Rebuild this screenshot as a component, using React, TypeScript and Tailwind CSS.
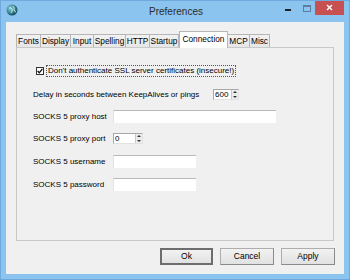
import React from "react";

const font = { fontFamily: '"Liberation Sans", Arial, sans-serif' };

const tabs = [
  { name: "Fonts", w: "w-[25px]" },
  { name: "Display", w: "w-[31px]" },
  { name: "Input", w: "w-[24px]" },
  { name: "Spelling", w: "w-[33px]" },
  { name: "HTTP", w: "w-[25px]" },
  { name: "Startup", w: "w-[30px]" },
  { name: "Connection", w: "w-[49px]", active: true },
  { name: "MCP", w: "w-[23px]" },
  { name: "Misc", w: "w-[21px]" },
];

function Spin({ value, w }: { value: string; w: string }) {
  return (
    <div
      className={`${w} h-[11px] flex bg-white border border-[#a8a8a8] border-r-[#e2e2e2] border-b-[#e2e2e2]`}
    >
      <span className="flex-1 text-[8px] leading-[9px] pl-[1px] text-black">{value}</span>
      <div className="w-[7px] flex flex-col bg-[#ececec] border-l border-[#c8c8c8]">
        <div className="flex-1 flex items-center justify-center">
          <div className="w-0 h-0 border-l-[2px] border-r-[2px] border-b-[2px] border-l-transparent border-r-transparent border-b-[#333]" />
        </div>
        <div className="flex-1 flex items-center justify-center">
          <div className="w-0 h-0 border-l-[2px] border-r-[2px] border-t-[2px] border-l-transparent border-r-transparent border-t-[#333]" />
        </div>
      </div>
    </div>
  );
}

function Field({ w }: { w: string }) {
  return (
    <div className={`${w} h-[13px] bg-white border-t border-[#b9b9b9] border-l border-l-[#e3e3e3]`} />
  );
}

function Btn({ label, main }: { label: string; main?: boolean }) {
  return (
    <button
      className={`h-[17px] flex items-center justify-center text-[8.5px] text-black bg-gradient-to-b from-[#f2f2f2] to-[#e1e1e1] ${
        main
          ? "w-[53px] border-2 border-[#6d6d6d]"
          : "w-[54px] border border-[#adadad] border-r-[#8a8a8a] border-b-[#8a8a8a]"
      }`}
    >
      {label}
    </button>
  );
}

export default function App() {
  return (
    <div
      style={font}
      className="w-[350px] h-[280px] bg-[#8cc4f0] border border-[#6fa9dd] flex flex-col overflow-hidden"
    >
      {/* TITLE BAR */}
      <div className="h-[21px] flex items-start relative">
        <svg className="absolute left-[5px] top-[3px]" width="12" height="12" viewBox="0 0 12 12">
          <defs>
            <radialGradient id="g" cx="0.35" cy="0.35" r="0.7">
              <stop offset="0" stopColor="#7fd0d8" />
              <stop offset="1" stopColor="#0f4b5c" />
            </radialGradient>
          </defs>
          <circle cx="6" cy="6" r="5.5" fill="url(#g)" />
          <path d="M3 4 Q5 3 6 5 T5 9 M7 2 Q9 4 8 6 Q9 8 10 8" stroke="#cfeff2" strokeWidth="0.9" fill="none" />
        </svg>
        <div className="flex-1 text-center text-[10px] leading-[21px] text-[#2b2b2b] pl-[2px]">
          Preferences
        </div>
        <div className="absolute left-[284px] top-[8px] w-[6px] h-[2px] bg-[#222]" />
        <div className="absolute left-[302px] top-[4px] w-[8px] h-[7px] border border-[#5a7da0] border-t-2" />
        <div className="absolute left-[314px] top-[-1px] w-[29px] h-[15px] bg-[#c75050] flex items-center justify-center">
          <svg width="7" height="7" viewBox="0 0 7 7">
            <path d="M1 1 L6 6 M6 1 L1 6" stroke="#fff" strokeWidth="1.4" />
          </svg>
        </div>
      </div>

      {/* CLIENT */}
      <div className="flex-1 mx-[5px] mb-[5px] bg-[#f0f0f0] flex flex-col pl-[10px] pr-[10px] pt-[9px]">
        {/* TABS */}
        <div className="flex items-end h-[16px] relative z-10">
          {tabs.map((t) =>
            t.active ? (
              <div
                key={t.name}
                className={`${t.w} h-[17px] -mb-[1px] bg-white border border-b-0 border-[#b5b5b5] text-[8.3px] leading-[14px] text-center text-black whitespace-nowrap`}
              >
                {t.name}
              </div>
            ) : (
              <div
                key={t.name}
                className={`${t.w} h-[13px] bg-gradient-to-b from-[#f2f2f2] to-[#e6e6e6] border border-b-0 border-[#b5b5b5] -ml-[1px] first:ml-0 text-[8.3px] leading-[12px] text-center text-black whitespace-nowrap`}
              >
                {t.name}
              </div>
            )
          )}
        </div>

        {/* PANEL */}
        <div className="w-[318px] h-[194px] border border-[#c9c9c9] bg-[#f0f0f0] flex flex-col pl-[16px] pt-[17px] text-[8px] text-black">
          <div className="h-[12px] flex items-center">
            <div className="ml-[3px] w-[8px] h-[8px] bg-white border border-[#333] flex items-center justify-center">
              <svg width="6" height="6" viewBox="0 0 6 6">
                <path d="M0.6 3 L2.3 4.8 L5.4 0.8" stroke="#111" strokeWidth="1.3" fill="none" />
              </svg>
            </div>
            <div className="ml-[2px] h-[12px] px-[1px] border border-dotted border-[#555] leading-[10px] whitespace-nowrap">
              Don't authenticate SSL server certificates (insecure!)
            </div>
          </div>

          <div className="mt-[12px] h-[11px] flex items-center">
            <span className="w-[180px] whitespace-nowrap">Delay in seconds between KeepAlives or pings</span>
            <Spin value="600" w="w-[26px]" />
          </div>

          <div className="mt-[10px] h-[13px] flex items-center">
            <span className="w-[80px] whitespace-nowrap">SOCKS 5 proxy host</span>
            <Field w="w-[163px]" />
          </div>

          <div className="mt-[10px] h-[11px] flex items-center">
            <span className="w-[80px] whitespace-nowrap">SOCKS 5 proxy port</span>
            <Spin value="0" w="w-[30px]" />
          </div>

          <div className="mt-[11px] h-[13px] flex items-center">
            <span className="w-[80px] whitespace-nowrap">SOCKS 5 username</span>
            <Field w="w-[83px]" />
          </div>

          <div className="mt-[10px] h-[13px] flex items-center">
            <span className="w-[80px] whitespace-nowrap">SOCKS 5 password</span>
            <Field w="w-[83px]" />
          </div>
        </div>

        {/* BUTTONS */}
        <div className="mt-[7px] flex justify-end gap-[7px] -mr-[1px]">
          <Btn label="Ok" main />
          <Btn label="Cancel" />
          <Btn label="Apply" />
        </div>
      </div>
    </div>
  );
}
